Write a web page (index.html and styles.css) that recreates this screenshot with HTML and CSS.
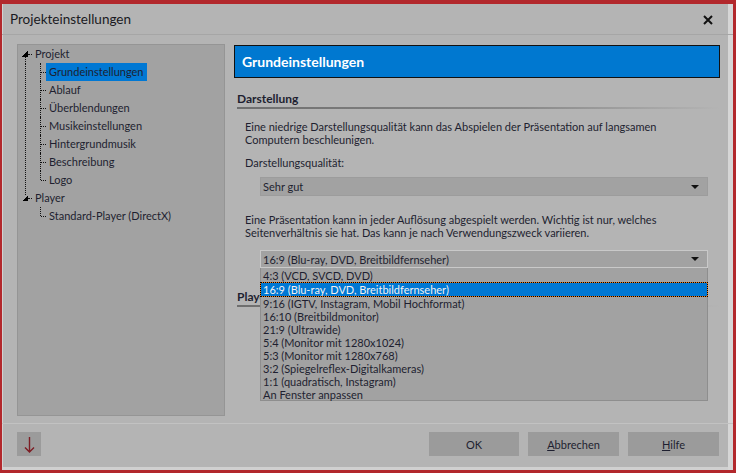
FILE: index.html
```html
<!DOCTYPE html>
<html lang="de">
<head>
    <meta charset="UTF-8">
    <title>Projekteinstellungen</title>
    <link rel="stylesheet" href="styles.css">
</head>
<body>
    <div class="window">
        <div class="titlebar">
            <span class="title">Projekteinstellungen</span>
            <svg class="close" width="10" height="10" viewBox="0 0 10 10"><path d="M1 1 L9 9 M9 1 L1 9" stroke="#111" stroke-width="2"/></svg>
        </div>

        <div class="main">
            <!-- Baum links -->
            <div class="tree">
                <div class="row root">
                    <span class="exp open-down"></span><span class="hline"></span><span class="txt">Projekt</span>
                </div>
                <div class="children trunk">
                    <div class="row child"><span class="branch"></span><span class="txt selected">Grundeinstellungen</span></div>
                    <div class="row child"><span class="branch"></span><span class="txt">Ablauf</span></div>
                    <div class="row child"><span class="branch"></span><span class="txt">Überblendungen</span></div>
                    <div class="row child"><span class="branch"></span><span class="txt">Musikeinstellungen</span></div>
                    <div class="row child"><span class="branch"></span><span class="txt">Hintergrundmusik</span></div>
                    <div class="row child"><span class="branch"></span><span class="txt">Beschreibung</span></div>
                    <div class="row child"><span class="branch last"></span><span class="txt">Logo</span></div>
                </div>
                <div class="row root">
                    <span class="exp open-up"></span><span class="hline"></span><span class="txt">Player</span>
                </div>
                <div class="children">
                    <div class="row child"><span class="branch last"></span><span class="txt">Standard-Player (DirectX)</span></div>
                </div>
            </div>

            <!-- Einstellungsseite -->
            <div class="content">
                <div class="page-header">Grundeinstellungen</div>

                <div class="section">
                    <h2 class="section-title">Darstellung</h2>
                    <p class="hint">Eine niedrige Darstellungsqualität kann das Abspielen der Präsentation auf langsamen<br>Computern beschleunigen.</p>
                    <p class="label">Darstellungsqualität:</p>
                    <div class="combo"><span>Sehr gut</span><span class="arrow"></span></div>
                    <p class="hint second">Eine Präsentation kann in jeder Auflösung abgespielt werden. Wichtig ist nur, welches<br>Seitenverhältnis sie hat. Das kann je nach Verwendungszweck variieren.</p>
                    <div class="combo-wrap">
                        <div class="combo focused"><span>16:9 (Blu-ray, DVD, Breitbildfernseher)</span><span class="arrow"></span></div>
                        <ul class="dropdown">
                            <li>4:3 (VCD, SVCD, DVD)</li>
                            <li class="active">16:9 (Blu-ray, DVD, Breitbildfernseher)</li>
                            <li>9:16 (IGTV, Instagram, Mobil Hochformat)</li>
                            <li>16:10 (Breitbildmonitor)</li>
                            <li>21:9 (Ultrawide)</li>
                            <li>5:4 (Monitor mit 1280x1024)</li>
                            <li>5:3 (Monitor mit 1280x768)</li>
                            <li>3:2 (Spiegelreflex-Digitalkameras)</li>
                            <li>1:1 (quadratisch, Instagram)</li>
                            <li>An Fenster anpassen</li>
                        </ul>
                    </div>
                </div>

                <div class="section">
                    <h2 class="section-title player">Player</h2>
                    <div class="combo tall"><span>Standard-Player (DirectX)</span><span class="arrow"></span></div>
                </div>
            </div>
        </div>

        <div class="footer">
            <button class="btn-icon">
                <svg width="24" height="24" viewBox="0 0 24 24"><path d="M12.5 5 V20 M8 15.5 L12.5 20 L17 15.5" stroke="#7d1d24" stroke-width="1.4" fill="none"/></svg>
            </button>
            <div class="buttons">
                <button class="btn ok">OK</button>
                <button class="btn"><u>A</u>bbrechen</button>
                <button class="btn"><u>H</u>ilfe</button>
            </div>
        </div>
    </div>
</body>
</html>
```

FILE: styles.css
```css
body {
    margin: 0;
    font-family: 'Lato', 'Noto Sans', sans-serif;
    font-size: 11px;
    color: #1e1f30;
    background: #b4b4b4;
}
.window {
    box-sizing: border-box;
    width: 736px;
    height: 473px;
    border: solid #b2282c;
    border-width: 4px 3px 3px 2px;
    background: #b4b4b4;
    display: flex;
    flex-direction: column;
    box-shadow: inset 1px 0 0 #d2d2d2, inset -5px 0 0 #d6d6d6, inset 0 -3px 0 #d0d0d0;
}
.titlebar {
    height: 30px;
    display: flex;
    align-items: center;
    justify-content: space-between;
    padding: 0 20px 0 8px;
    border-bottom: 1px solid #a6a6a6;
    flex-shrink: 0;
}
.title {
    font-size: 13.5px;
    color: #1a1a22;
}
.close {
    margin-top: 1px;
}
.main {
    display: flex;
    padding: 9px 8px 0 15px;
    height: 379px;
}

/* Baum */
.tree {
    box-sizing: border-box;
    width: 208px;
    height: 372px;
    background: #a2a2a2;
    border: 1px solid #959595;
    padding: 0 0 0 5px;
}
.row {
    height: 18px;
    display: flex;
    align-items: center;
    white-space: nowrap;
}
.txt {
    padding: 0 3px;
    line-height: 18px;
}
.txt.selected {
    background: #0078d4;
}
.exp {
    position: relative;
    width: 6px;
    height: 6px;
    margin-left: -1px;
    background: linear-gradient(to bottom right, transparent 50%, #000 50%);
}
.exp.open-down::after {
    content: "";
    position: absolute;
    left: 3px;
    top: 6px;
    height: 7px;
    border-left: 1px dotted #111;
}
.exp.open-up::before {
    content: "";
    position: absolute;
    left: 3px;
    top: -7px;
    height: 7px;
    border-left: 1px dotted #111;
}
.hline {
    width: 4px;
    border-top: 1px dotted #111;
    margin-top: 1px;
}
.children {
    margin-left: 2px;
    border-left: 1px solid transparent;
}
.children.trunk {
    border-left: 1px dotted #111;
}
.child {
    padding-left: 14px;
}
.branch {
    position: relative;
    width: 6px;
    height: 18px;
}
.branch::before {
    content: "";
    position: absolute;
    left: 0;
    top: 0;
    height: 18px;
    border-left: 1px dotted #111;
}
.branch.last::before {
    height: 9px;
}
.branch::after {
    content: "";
    position: absolute;
    left: 1px;
    top: 9px;
    width: 5px;
    border-top: 1px dotted #111;
}

/* Inhalt */
.content {
    margin-left: 9px;
    width: 486px;
}
.page-header {
    margin-top: 1px;
    height: 31px;
    line-height: 31px;
    background: #0078d0;
    border: 1px solid #111;
    color: #fff;
    font-weight: bold;
    font-size: 14px;
    padding-left: 7px;
}
.section-title {
    margin: 13px 0 0 3px;
    font-size: 12px;
    font-weight: bold;
    line-height: 15px;
}
.section-title::after {
    content: "";
    display: block;
    height: 2px;
    margin-top: 1px;
    background: linear-gradient(to right, #6e6e6e, #8a8a8a 60%, #b4b4b4);
}
.section-title.player {
    margin-top: 21px;
}
.hint {
    margin: 11px 0 0 11px;
    line-height: 13px;
    white-space: nowrap;
}
.hint.second {
    margin-top: 17px;
}
.label {
    margin: 10px 0 0 11px;
    line-height: 13px;
}
.combo {
    box-sizing: border-box;
    margin: 8px 0 0 26px;
    width: 448px;
    height: 19px;
    background: #a2a2a2;
    border: 1px solid #9c9c9c;
    display: flex;
    align-items: center;
    justify-content: space-between;
    padding: 0 8px 0 2px;
    white-space: nowrap;
}
.combo.focused {
    border-color: #c9c9c9;
    height: 18px;
    margin: 0;
}
.combo.tall {
    height: 24px;
    margin-top: 6px;
}
.arrow {
    width: 0;
    height: 0;
    border-left: 4px solid transparent;
    border-right: 4px solid transparent;
    border-top: 4px solid #111;
}
.combo-wrap {
    position: relative;
    margin: 11px 0 0 26px;
    width: 448px;
}
.dropdown {
    position: absolute;
    left: 0;
    top: 18px;
    z-index: 2;
    box-sizing: border-box;
    width: 448px;
    margin: 0;
    padding: 1px 0 0;
    list-style: none;
    background: #a2a2a2;
    border: 1px solid #8e8e8e;
    border-top: none;
    height: 133px;
}
.dropdown li {
    height: 13px;
    line-height: 13px;
    padding-left: 2px;
    white-space: nowrap;
}
.dropdown li.active {
    color: #f2f2f2;
    border: 1px dotted #000;
    background: linear-gradient(#0078d4, #0078d4) padding-box, #f07d1a border-box;
    margin: 0 -1px;
    padding-left: 2px;
}

/* Fußzeile */
.footer {
    margin-top: auto;
    box-sizing: border-box;
    height: 44px;
    margin-bottom: 3px;
    border-top: 1px solid #c2c2c2;
    display: flex;
    justify-content: space-between;
    padding: 8px 14px 0 15px;
}
.btn-icon {
    width: 24px;
    height: 24px;
    padding: 0;
    border: none;
    background: #9b9b9b;
}
.btn-icon svg {
    display: block;
}
.buttons {
    display: flex;
    gap: 9px;
}
.btn {
    width: 91px;
    height: 24px;
    border: none;
    background: #9b9b9b;
    font-family: 'Lato', 'Noto Sans', sans-serif;
    font-size: 11px;
    color: #1e1f30;
}
.btn.ok {
    width: 90px;
}
```
